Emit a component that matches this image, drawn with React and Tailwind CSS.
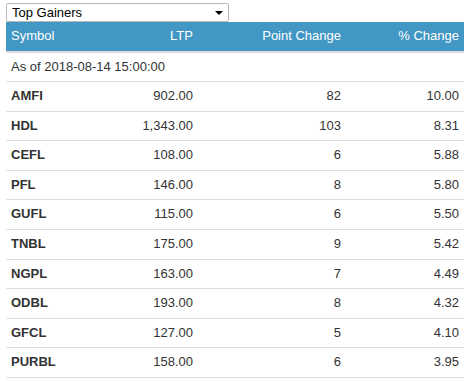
import React from "react";

const rows = [
  ["AMFI", "902.00", "82", "10.00"],
  ["HDL", "1,343.00", "103", "8.31"],
  ["CEFL", "108.00", "6", "5.88"],
  ["PFL", "146.00", "8", "5.80"],
  ["GUFL", "115.00", "6", "5.50"],
  ["TNBL", "175.00", "9", "5.42"],
  ["NGPL", "163.00", "7", "4.49"],
  ["ODBL", "193.00", "8", "4.32"],
  ["GFCL", "127.00", "5", "4.10"],
  ["PURBL", "158.00", "6", "3.95"],
];

export default function App() {
  return (
    <div
      className="w-[476px] h-[382px] bg-white text-[13px] leading-[1.42857] text-[#333]"
      style={{ fontFamily: '"Liberation Sans", Arial, sans-serif' }}
    >
      <div className="pt-[3px] pl-[6px]">
        <div className="w-[223px] h-[19px] border border-[#b9b9b9] rounded-[2px] flex items-center justify-between pl-[5px] pr-[4px] text-black">
          <span className="leading-none">Top Gainers</span>
          <span className="w-0 h-0 border-l-[4px] border-r-[4px] border-t-[4px] border-l-transparent border-r-transparent border-t-black mr-[1px]" />
        </div>
      </div>
      <table className="ml-[6px] w-[458px] table-fixed border-collapse">
        <colgroup>
          <col className="w-[96px]" />
          <col className="w-[96px]" />
          <col className="w-[148px]" />
          <col className="w-[118px]" />
        </colgroup>
        <thead>
          <tr className="bg-[#4297c5] text-white">
            <th className="font-normal text-left p-[5px] border-b-2 border-[#dddddd]">Symbol</th>
            <th className="font-normal text-right p-[5px] border-b-2 border-[#dddddd]">LTP</th>
            <th className="font-normal text-right p-[5px] border-b-2 border-[#dddddd]">Point Change</th>
            <th className="font-normal text-right p-[5px] border-b-2 border-[#dddddd]">% Change</th>
          </tr>
        </thead>
        <tbody>
          <tr>
            <td colSpan={4} className="p-[5px] text-left">
              As of 2018-08-14 15:00:00
            </td>
          </tr>
          {rows.map((r) => (
            <tr key={r[0]} className="border-t border-[#dddddd]">
              <td className="p-[5px] font-bold text-left">{r[0]}</td>
              <td className="p-[5px] text-right">{r[1]}</td>
              <td className="p-[5px] text-right">{r[2]}</td>
              <td className="p-[5px] text-right">{r[3]}</td>
            </tr>
          ))}
          <tr className="border-t border-[#dddddd]">
            <td colSpan={4} className="p-0 h-0" />
          </tr>
        </tbody>
      </table>
    </div>
  );
}
